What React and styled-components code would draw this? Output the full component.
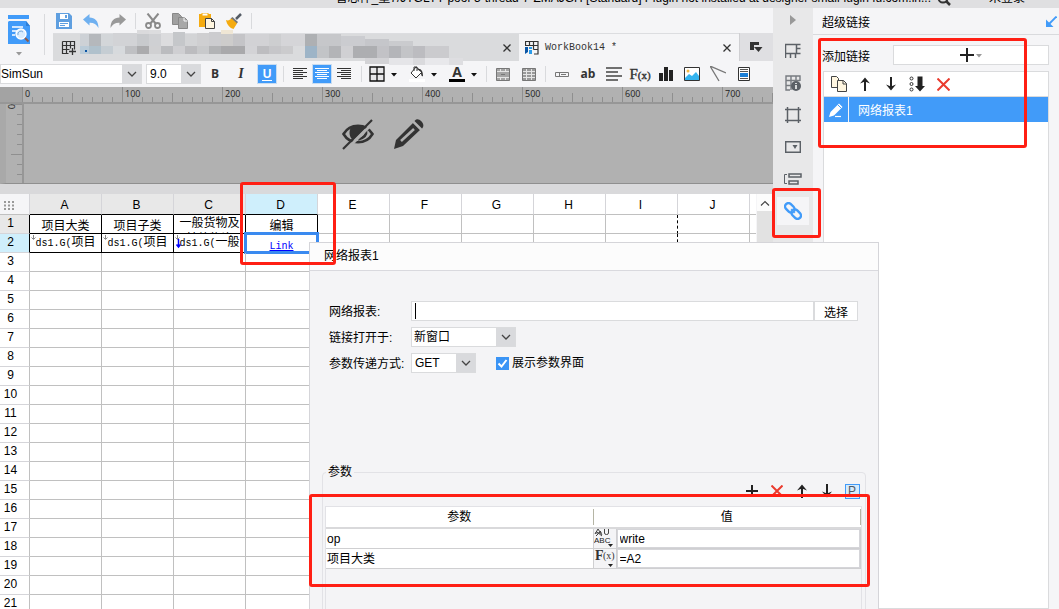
import React, { useState } from 'react';
import styled, { createGlobalStyle, css } from 'styled-components';

const GlobalStyle = createGlobalStyle`
  * {
    box-sizing: border-box;
  }

  body {
    margin: 0;
    overflow: hidden;
    background: #f5f5f7;
  }

  body, button, input, select {
    font-family: 'Liberation Sans', 'Noto Sans CJK SC', sans-serif;
    font-size: 12px;
    color: #000;
  }

  button {
    padding: 0;
    border: none;
    background: none;
    cursor: pointer;
  }

  svg {
    display: block;
    flex-shrink: 0;
  }
`;

const Window = styled.div`
  position: relative;
  display: flex;
  flex-direction: column;
  height: 100vh;
  overflow: hidden;
`;

const TitleBar = styled.header`
  display: flex;
  align-items: flex-end;
  gap: 6px;
  height: 8px;
  flex-shrink: 0;
  overflow: hidden;
  padding: 0 34px 2px 0;
  background: #dfdfe1;
  line-height: 16px;
  white-space: nowrap;
`;

const TitleText = styled.span`
  flex: 1;
  text-align: right;
`;

const UserName = styled.span`
  margin-left: 32px;
`;

const Workspace = styled.div`
  display: grid;
  grid-template-columns: minmax(0, 1fr) 40px 246px;
  flex: 1;
  min-height: 0;
`;

const Editor = styled.main`
  display: flex;
  flex-direction: column;
  min-height: 0;
  min-width: 0;
`;

/* ---------- top area ---------- */

const Top = styled.div`
  display: flex;
  height: 53px;
  flex-shrink: 0;
`;

const LogoMenu = styled.button`
  display: flex;
  flex-direction: column;
  align-items: center;
  gap: 7px;
  width: 44px;
  padding: 7px 7px 0 0;
`;

const TopColumn = styled.div`
  display: flex;
  flex-direction: column;
  flex: 1;
  min-width: 0;
`;

const QuickBar = styled.div`
  display: flex;
  align-items: center;
  gap: 7px;
  height: 25px;
  padding-left: 1px;
`;

const Separator = styled.span`
  width: 1px;
  height: ${(p) => p.$height || 16}px;
  margin: 0 ${(p) => p.$space || 0}px;
  background: #d9dadd;
  flex-shrink: 0;
`;

const LogoSeparator = styled.span`
  width: 1px;
  margin: 6px 8px 6px 0;
  background: #d9dadd;
`;

const ToolButton = styled.button`
  display: flex;
  align-items: center;
  justify-content: center;
  width: 20px;
  height: 20px;
  flex-shrink: 0;
  color: #333;

  ${(p) => p.$active && css`
    background: #419bf9;
    color: #fff;
    outline: 1px solid #c9dcf0;
    outline-offset: -1px;
  `}
`;

const Tabs = styled.div`
  display: flex;
  height: 28px;
`;

const Tab = styled.div`
  position: relative;
  display: flex;
  align-items: center;
  gap: 6px;
  padding: 0 6px;
  background: ${(p) => (p.$active ? '#f5f5f7' : '#dadbdd')};
  border-top: 1px solid #dcdde0;
  ${(p) => (p.$active ? 'width: 220px;' : 'flex: 1; padding-left: 8px;')}
`;

const TabName = styled.span`
  flex: 1;
  font-family: 'Liberation Mono', monospace;
  font-size: 10px;
  color: #333;
`;

const TabClose = styled.button`
  display: flex;
  justify-content: center;
  width: 12px;
`;

const TabMenu = styled.button`
  display: flex;
  align-items: center;
  justify-content: center;
  width: 34px;
  background: #dfdfe2;
  border-left: 1px solid #cfcfd2;
`;

const Smudge = styled.svg`
  position: absolute;
  left: 27px;
  top: -4px;
  pointer-events: none;
`;

/* ---------- format bar ---------- */

const FormatBar = styled.div`
  display: flex;
  align-items: center;
  height: 26px;
  flex-shrink: 0;
  overflow: hidden;
`;

const ToolGroup = styled.div`
  display: flex;
  align-items: center;
  gap: ${(p) => p.$gap}px;
`;

const FontGroup = styled(ToolGroup)`
  margin-right: 4px;
`;

const SelectBox = styled.div`
  display: grid;
  grid-template-columns: minmax(0, 1fr) 20px;
  align-items: center;
  width: ${(p) => p.$width}px;
  height: 20px;

  select {
    grid-area: 1 / 1 / 2 / 3;
    width: 100%;
    height: 20px;
    padding: 0 20px 0 ${(p) => p.$indent || 0}px;
    border: 1px solid #dadbdd;
    border-radius: 0;
    background: linear-gradient(#d9dadd, #d9dadd) right / 19px 100% no-repeat #fff;
    appearance: none;
    outline: none;
  }

  svg {
    grid-area: 1 / 2;
    justify-self: center;
    pointer-events: none;
  }
`;

const DropTool = styled.button`
  display: flex;
  align-items: center;
  gap: 5px;
  width: 31px;
  height: 20px;
`;

const Bold = styled.b`
  font-family: 'Open Sans', sans-serif;
  font-size: 12px;
  line-height: 16px;
  font-weight: 700;
`;

const Italic = styled.i`
  font-family: 'Liberation Serif', serif;
  font-size: 14px;
  font-weight: 700;
`;

const Underline = styled.span`
  width: 10px;
  border-bottom: 1px solid #fff;
  font-weight: 700;
  line-height: 12px;
`;

const Formula = styled.span`
  font-family: 'Liberation Serif', serif;
  font-size: 15px;
  line-height: 16px;
  white-space: nowrap;
  color: #333;
  -webkit-text-stroke: 0.4px #333;

  small {
    font-size: 11px;
  }
`;

/* ---------- ruler and parameter pane ---------- */

const Ruler = styled.div`
  display: flex;
  height: 17px;
  flex-shrink: 0;
  overflow: hidden;
  padding-left: 22px;
  background: linear-gradient(#a3a3a3, #a3a3a3) left / 22px 100% no-repeat #b1b1b1;
  border-bottom: 2px solid #979797;
`;

const RulerUnit = styled.span`
  width: 100px;
  height: 15px;
  flex-shrink: 0;
  padding-left: 3px;
  font-family: 'Open Sans', sans-serif;
  font-size: 9px;
  line-height: 13px;
  color: #222;
  background:
    linear-gradient(90deg, #8f8f8f 1px, transparent 1px) 0 0 / 100px 15px repeat-x,
    linear-gradient(90deg, #8f8f8f 1px, transparent 1px) 0 100% / 50px 9px repeat-x,
    linear-gradient(90deg, #8f8f8f 1px, transparent 1px) 0 100% / 10px 5px repeat-x;
`;

const ParamPane = styled.div`
  display: flex;
  height: 80px;
  flex-shrink: 0;
  background: #b1b1b1;
  border-left: 6px solid #a9a9a9;
  border-bottom: 1px solid #8f8f8f;
`;

const SideRuler = styled.div`
  width: 18px;
  border-right: 2px solid #979797;
  font-family: 'Open Sans', sans-serif;
  font-size: 9px;
  color: #222;
  background:
    linear-gradient(#8f8f8f 1px, transparent 1px) 100% 0 / 11px 50px repeat-y,
    linear-gradient(#8f8f8f 1px, transparent 1px) 100% 0 / 5px 10px repeat-y;

  span {
    display: block;
    width: 10px;
    line-height: 10px;
    writing-mode: vertical-rl;
  }
`;

const ParamCanvas = styled.div`
  display: flex;
  align-items: center;
  justify-content: center;
  gap: 19px;
  flex: 1;
  padding: 0 30px 20px 0;
`;

const Splitter = styled.div`
  height: 10px;
  flex-shrink: 0;
  background: #d9d9db;
`;

/* ---------- sheet ---------- */

const SheetArea = styled.div`
  display: flex;
  flex: 1;
  min-height: 0;
  background: #fff;
`;

const SheetClip = styled.div`
  flex: 1;
  min-width: 0;
  overflow: hidden;
`;

const Sheet = styled.table`
  width: 100%;
  table-layout: fixed;
  border-spacing: 0;
  border-collapse: separate;
`;

const ColHead = styled.th`
  width: ${(p) => p.$width || 'auto'};
  height: 21px;
  padding: 2px 2px 0 0;
  font-weight: 400;
  line-height: 16px;
  border-right: ${(p) => (p.$width ? 1 : 0)}px solid #d5d5d9;
  border-bottom: 1px solid ${(p) => (p.$used ? '#000' : '#c0c0c0')};
  background: ${(p) => p.$tone || '#fff'};

  svg {
    margin-left: 4px;
  }
`;

const RowHead = styled.th`
  height: 19px;
  padding: 0 8px 2px 0;
  font-weight: 400;
  line-height: 16px;
  border-right: 1px solid ${(p) => (p.$used ? '#000' : '#c0c0c0')};
  border-bottom: 1px solid #d5d5d9;
  background: ${(p) => p.$tone || '#fff'};
`;

const Cell = styled.td`
  position: relative;
  height: 19px;
  padding: 0;
  text-align: center;
  vertical-align: top;
  border-right: 1px ${(p) => (p.$pageBreak ? 'dashed' : 'solid')} ${(p) => (p.$used || p.$pageBreak ? '#000' : '#c0c0c0')};
  border-bottom: 1px solid ${(p) => (p.$used ? '#000' : '#c0c0c0')};

  &:last-child {
    border-right: none;
  }

  ${(p) => p.$selected && css`
    &::after {
      content: '';
      position: absolute;
      inset: -2px;
      border: 3px solid #3a8af0;
      pointer-events: none;
    }
  `}
`;

const CellText = styled.div`
  height: 18px;
  padding-top: ${(p) => (p.$wrapped ? 0 : 3)}px;
  overflow: hidden;
  line-height: 16px;
  white-space: pre-line;
`;

const Mono = styled.span`
  font-family: 'Liberation Mono', monospace;
  font-size: 10px;
`;

const CellLink = styled.a`
  font-family: 'Liberation Mono', monospace;
  font-size: 10px;
  color: #00f;
`;

const ExpandMark = styled.svg`
  position: absolute;
  left: 1px;
  top: 1px;
`;

const ScrollTrack = styled.div`
  width: 17px;
  background: #e2e2e2;
  border-left: 1px solid #f5f5f7;
`;

const ScrollButton = styled.button`
  display: flex;
  align-items: center;
  justify-content: center;
  width: 16px;
  height: 17px;
  background: #fcfcfc;
`;

/* ---------- right side ---------- */

const IconRail = styled.nav`
  display: flex;
  flex-direction: column;
  align-items: center;
  background: #e8e8e9;
`;

const RailToggle = styled.button`
  display: flex;
  align-items: center;
  height: 24px;
  margin-bottom: 3px;
`;

const RailItem = styled.button`
  display: flex;
  align-items: center;
  justify-content: center;
  width: 32px;
  height: 28px;
  margin: 2px 0;
  background: ${(p) => (p.$active ? '#f5f5f7' : 'transparent')};
`;

const Panel = styled.aside`
  display: flex;
  flex-direction: column;
  min-height: 0;
  background: #f5f5f7;
`;

const PanelHead = styled.div`
  display: flex;
  align-items: center;
  justify-content: space-between;
  height: 27px;
  padding: 0 2px 0 9px;
  border-bottom: 1px solid #d9dadd;
`;

const AddRow = styled.div`
  display: flex;
  align-items: center;
  gap: 23px;
  padding: 10px 10px 6px 9px;
`;

const AddButton = styled.button`
  display: flex;
  align-items: center;
  justify-content: center;
  gap: 1px;
  flex: 1;
  height: 20px;
  background: #fff;
  border: 1px solid #dadbdd;
`;

const LinkList = styled.div`
  flex: 1;
  margin: 0 10px;
  background: #fff;
  border: 1px solid #dadbdd;
`;

const ListTools = styled.div`
  display: flex;
  align-items: center;
  gap: 6px;
  height: 25px;
  padding-left: 5px;
  border-bottom: 1px solid #dadbdd;
`;

const LinkItem = styled.div`
  display: flex;
  align-items: center;
  height: 25px;
  color: #fff;
  background: #419bf9;

  button {
    display: flex;
    align-items: center;
    justify-content: center;
    width: 25px;
    height: 25px;
    margin-right: 9px;
    border-right: 1px solid #f5f5f7;
  }
`;

/* ---------- dialog ---------- */

const Dialog = styled.section`
  position: absolute;
  left: 309px;
  top: 242px;
  bottom: 0;
  width: 570px;
  display: flex;
  flex-direction: column;
  overflow: hidden;
  background: #f4f4f6;
  border: 1px solid #d5d5d9;
  border-bottom: none;
`;

const DialogTitle = styled.h1`
  margin: 0;
  padding: 0 14px;
  font-size: 12px;
  font-weight: 400;
  line-height: 27px;
  background: #fcfcfc;
  border-bottom: 1px solid #d9d9de;
`;

const Form = styled.form`
  display: grid;
  grid-template-columns: 82px minmax(0, 1fr);
  grid-auto-rows: 20px;
  row-gap: 6px;
  padding: 30px 20px 0 19px;
  line-height: 22px;
`;

const Field = styled.div`
  display: flex;
  height: 20px;
`;

const TextInput = styled.input`
  flex: 1;
  min-width: 0;
  padding: 0 3px;
  border: 1px solid #dadbdd;
  outline: none;
  caret-color: transparent;

  &:placeholder-shown {
    background: linear-gradient(#000, #000) 3px center / 1px 16px no-repeat #fff;
  }

  &:not(:placeholder-shown) {
    caret-color: #000;
  }
`;

const ChooseButton = styled.button`
  width: 44px;
  background: #fff;
  border: 1px solid #dadbdd;
`;

const CheckLabel = styled.label`
  display: flex;
  align-items: center;
  gap: 3px;
  height: 20px;
  margin-left: 20px;
`;

const Check = styled.input`
  appearance: none;
  width: 13px;
  height: 13px;
  margin: 0;
  background: #3a94f5;

  &:checked {
    background: #3a94f5 url("data:image/svg+xml,%3Csvg xmlns='http://www.w3.org/2000/svg' width='13' height='13' fill='none' stroke='white' stroke-width='2'%3E%3Cpath d='M2.5 6.5l3 3 5-6.5'/%3E%3C/svg%3E");
  }
`;

const ParamSet = styled.fieldset`
  display: flex;
  flex-direction: column;
  flex: 1;
  min-width: 0;
  margin: 90px 12px -6px;
  padding: 0 3px 0 2px;
  border: 1px solid #e2e2e6;
  border-radius: 4px;

  legend {
    margin-left: 1px;
    padding: 0 2px;
    line-height: 18px;
  }
`;

const ParamTools = styled.div`
  display: flex;
  justify-content: flex-end;
  gap: 5px;
  padding-bottom: 5px;
`;

const ParamToggle = styled.span`
  width: 15px;
  height: 15px;
  border: 1px solid #419bf9;
  background: #d5ebfc;
  color: #4f5a66;
  line-height: 13px;
`;

const TablePane = styled.div`
  flex: 1;
  border: 1px solid #e2e2e6;
`;

const ParamTable = styled.table`
  width: 100%;
  table-layout: fixed;
  border-spacing: 0;
  background: #fff;
`;

const ParamHead = styled.th`
  height: 22px;
  padding: 2px 0;
  font-weight: 400;
  border-bottom: 2px solid #d9d9db;

  span {
    display: block;
    line-height: 16px;
    border-right: 1px solid #b5b5a5;
  }
`;

const ParamCell = styled.td`
  height: 20px;
  padding: ${(p) => (p.$tight ? 0 : '0 1px')};
  line-height: 18px;
  border-right: 1px solid #cfcfd1;
  border-bottom: 1px solid #cfcfd1;
  background: ${(p) => (p.$tight ? '#f4f4f6' : '#fff')};
`;

const TypeButton = styled.button`
  display: flex;
  align-items: flex-start;
  width: 100%;
  height: 19px;
  overflow: hidden;
`;

const ValueInput = styled.input`
  display: block;
  width: 100%;
  height: 19px;
  padding: 0 2px;
  border: 1px solid #d5d5d9;
  outline: none;
`;

/* red marker boxes laid over the window */
const Marker = styled.div`
  position: absolute;
  left: ${(p) => p.$x}px;
  top: ${(p) => p.$y}px;
  width: ${(p) => p.$w}px;
  height: ${(p) => p.$h}px;
  border: 3px solid #ff1f14;
  border-radius: 3px;
  pointer-events: none;
`;

/* ---------- icons ---------- */

const Svg = ({ w = 16, h = 16, children, ...rest }) => (
  <svg width={w} height={h} viewBox={`0 0 ${w} ${h}`} fill="none" aria-hidden="true" {...rest}>
    {children}
  </svg>
);

const Caret = ({ color = '#111' }) => (
  <Svg w={8} h={5}><path d="M1 1h6L4 4.500z" fill={color} /></Svg>
);

const Chevron = () => (
  <Svg w={10} h={6}><path d="M1 1l4 4 4-4" stroke="#444" strokeWidth="1.3" /></Svg>
);

const LogoIcon = () => (
  <Svg w={22} h={29}>
    <path d="M0 0h21v4H0zM0 7l1-1h17l4 5v18H0z" fill="#419bf9" />
    <path d="M18 6v5h4z" fill="#2c7fd8" />
    <path d="M4 12h11M4 16h5M4 20h3" stroke="#fff" strokeWidth="1.5" />
    <circle cx="13" cy="19" r="5" fill="#d9ecfe" stroke="#fff" strokeWidth="1.4" />
    <path d="M10 20a3 3 0 015-3" stroke="#7aa9d8" />
    <path d="M17 23l3.500 3.500" stroke="#8d5b4c" strokeWidth="2" />
  </Svg>
);

const SaveIcon = () => (
  <Svg>
    <path d="M0 0h13l3 3v13H0z" fill="#5f9fe0" />
    <path d="M4 1h8v5H4z" fill="#fff" />
    <path d="M9 2h2v3H9z" fill="#5f9fe0" />
    <path d="M3 9h10v5H3z" fill="#fff" />
    <path d="M4 10.500h8M4 12.500h5" stroke="#5f9fe0" />
  </Svg>
);

const UndoIcon = ({ color = '#6fb0f0', flip }) => (
  <Svg style={flip ? { transform: 'scaleX(-1)' } : undefined}>
    <path d="M0 6.500L6.500 1v3.500C12 4.500 15.500 8 15.500 15c-2-4-5-5.500-9-5.300V12.500z" fill={color} />
  </Svg>
);

const CutIcon = () => (
  <Svg>
    <path d="M2.500 0.500L11 11M13.500 0.500L5 11" stroke="#8a8a8a" strokeWidth="2" />
    <circle cx="3.500" cy="12.500" r="2.500" stroke="#8a8a8a" strokeWidth="1.8" />
    <circle cx="12.500" cy="12.500" r="2.500" stroke="#8a8a8a" strokeWidth="1.8" />
  </Svg>
);

const CopyIcon = () => (
  <Svg>
    <path d="M0.500 0.500h6l3 3v8h-9z" fill="#a0a0a0" stroke="#888" />
    <path d="M6.500 4.500h6l3 3v8h-9z" fill="#a8a8a8" stroke="#888" />
    <path d="M12 4.500v3.500h3.500" stroke="#f5f5f7" />
  </Svg>
);

const PasteIcon = () => (
  <Svg>
    <path d="M0 1h12v13H0z" fill="#f5ab10" />
    <path d="M3 0h6v3H3z" fill="#fff" stroke="#f5ab10" />
    <path d="M6.500 5.500h6l3 3v7h-9z" fill="#fff6e0" stroke="#444" />
    <path d="M12.500 5.500v3h3" stroke="#444" />
  </Svg>
);

const BrushIcon = () => (
  <Svg>
    <path d="M15 1l-5 5" stroke="#555c66" strokeWidth="2.5" />
    <path d="M6.500 4l5.500 5-1.500 2L4.500 5.500z" fill="#777" />
    <path d="M0 7c2 1 4 0 5.500-1.500L11 10.500 7.500 16C4 15 1 12 0 7z" fill="#f5ab10" />
  </Svg>
);

const NewSheetIcon = () => (
  <Svg>
    <path d="M1.500 1.500h12v8M1.500 1.500v12h6M5.500 1.500v12M9.500 1.500v7M1.500 5.500h12M1.500 9.500h7" stroke="#333" strokeWidth="1.2" />
    <path d="M11.500 8v7M8 11.500h7" stroke="#333" strokeWidth="1.3" />
  </Svg>
);

const WorkbookIcon = () => (
  <Svg w={14} h={14}>
    <path d="M0.500 5V0.500h12.500v12.500H9M0.500 4.500H13M4.500 0.500v4M8.500 0.500v8M8.500 8.500H13" stroke="#333" strokeWidth="1.2" />
    <path d="M0 6h3v5l-3 2z" fill="#0a55a5" />
    <path d="M4 6h3v2H4zM4 9h3v4H4z" fill="#2a9ae8" />
  </Svg>
);

const CrossIcon = ({ size = 8, color = '#333', thick = 1.3 }) => (
  <Svg w={size} h={size}>
    <path d={`M0.500 0.500L${size - 0.5} ${size - 0.5}M${size - 0.5} 0.500L0.500 ${size - 0.5}`} stroke={color} strokeWidth={thick} />
  </Svg>
);

const TabMenuIcon = () => (
  <Svg w={13} h={11}>
    <path d="M0 0h9v3H4v5H0z" fill="#333" />
    <path d="M4 5h8.500L8.500 10z" fill="#333" />
  </Svg>
);

const AlignIcon = ({ mode }) => {
  const starts = { left: 0, center: 2, right: 4 };
  return (
    <Svg w={14} h={12}>
      {[0, 1, 2, 3, 4, 5].map((i) => (
        <path key={i} d={`M${i % 2 ? starts[mode] : 0} ${i * 2 + 0.5}h${i % 2 ? 10 : 14}`} stroke="currentColor" />
      ))}
    </Svg>
  );
};

const BorderIcon = () => (
  <Svg><path d="M1 1h14v14H1zM8 1v14M1 8h14" stroke="#111" strokeWidth="1.3" fill="#e8e8ea" /></Svg>
);

const FillIcon = () => (
  <Svg>
    <path d="M7 1L2 7l5 5 6-6z" fill="#fff" stroke="#333" />
    <path d="M5 5V1h3v4" stroke="#333" />
    <path d="M8 3c4-1 6 2 6 7-1 1-2 0-2-4z" fill="#333" />
    <path d="M0 13h16v3H0z" fill="#fff" />
  </Svg>
);

const FontColorIcon = styled.span`
  width: 16px;
  height: 16px;
  border-bottom: 3px solid #000;
  font-family: 'Open Sans', sans-serif;
  font-size: 14px;
  font-weight: 700;
  line-height: 12px;
  color: #333;
  text-align: center;
`;

const MergeIcon = () => (
  <Svg w={14} h={13}>
    <path d="M0.500 0.500h13v12H0.500z" fill="#a5a5a5" stroke="#777" />
    <path d="M4.500 1v2M9.500 1v2M4.500 10v2M9.500 10v2M1 3.500h12M1 9.500h12" stroke="#e5e5e5" />
    <path d="M5 6.500h4" stroke="#777" />
  </Svg>
);

const UnmergeIcon = () => (
  <Svg w={14} h={13}>
    <path d="M0.500 0.500h13v12H0.500z" fill="#999" stroke="#777" />
    <path d="M4.500 1v11M9.500 1v11M1 3.500h12M1 6.500h12M1 9.500h12" stroke="#e5e5e5" />
  </Svg>
);

const FieldIcon = () => (
  <Svg w={14} h={5}>
    <path d="M0.500 0.500h13v4H0.500zM4.500 0.500v4M6 2.500h5" stroke="#777" />
  </Svg>
);

const ParagraphIcon = () => (
  <Svg w={16} h={14}><path d="M0 1h16M0 5h12M0 9h16M0 13h12" stroke="#444" strokeWidth="1.6" /></Svg>
);

const ChartIcon = () => (
  <Svg w={14} h={14}><path d="M0 6h4v8H0zM5 0h4v14H5zM10 3h4v11h-4z" fill="#222" /></Svg>
);

const PictureIcon = () => (
  <Svg w={16} h={14}>
    <path d="M0.500 0.500h15v13H0.500z" fill="#fff" stroke="#333" />
    <circle cx="4" cy="4" r="1.5" fill="#f5b942" />
    <path d="M1 11l4-4 3 2 4-4 3 4v4H1z" fill="#35b4ef" />
  </Svg>
);

const SlashIcon = () => (
  <Svg><path d="M0 0l16 7M0 0l9 15" stroke="#777" strokeWidth="1.3" /></Svg>
);

const ReportIcon = () => (
  <Svg w={12} h={14}>
    <path d="M0.500 0.500h11v13H0.500z" fill="#fff" stroke="#333" />
    <path d="M2 2.500h8M2 4.500h8M2 11.500h8" stroke="#555" />
    <path d="M2 6h8v4H2z" fill="#1a7fd8" />
  </Svg>
);

const EyeOffIcon = () => (
  <Svg w={32} h={32}>
    <path d="M1.500 16C8 5 24 5 30.500 16 24 27 8 27 1.500 16z" stroke="#333" strokeWidth="2.6" />
    <path d="M9 9c-3 6-1 11 2 13L24 9c-5-3-11-2-15 0z" fill="#333" />
    <path d="M24 12c1 5-2 8-8 9.500" stroke="#333" strokeWidth="2.5" />
    <path d="M3 33L33 3" stroke="#b1b1b1" strokeWidth="3" />
    <path d="M1 31L30 2" stroke="#333" strokeWidth="2.2" />
  </Svg>
);

const PencilIcon = () => (
  <Svg w={32} h={32}>
    <path d="M20 5l7 7L10 28l-9 3 2-9z" fill="#333" />
    <path d="M22 2.500c3-4 11 3 7.500 7.500l-0.500 0.500-7.500-7.500z" fill="#333" />
    <path d="M21 11L8 23" stroke="#b1b1b1" strokeWidth="2.5" />
    <path d="M19.500 3.500l9 9" stroke="#b1b1b1" strokeWidth="1.3" />
  </Svg>
);

const ArrowIcon = ({ down }) => (
  <Svg w={12} h={14} style={down ? { transform: 'rotate(180deg)' } : undefined}>
    <path d="M6 14V3" stroke="#222" strokeWidth="2" />
    <path d="M1 6.500L6 0.500l5 6-5-2z" fill="#222" />
  </Svg>
);

const PlusIcon = ({ size = 12 }) => (
  <Svg w={size} h={size}>
    <path d={`M${size / 2} 0v${size}M0 ${size / 2}h${size}`} stroke="#222" strokeWidth="2" />
  </Svg>
);

const PagesIcon = () => (
  <Svg>
    <path d="M0.500 0.500h5l2 2v9h-7z" fill="#fff6e0" stroke="#444" />
    <path d="M6.500 4.500h6l3 3v8h-9z" fill="#fff6e0" stroke="#444" />
    <path d="M12 4.500v3.500h3.500" stroke="#444" />
  </Svg>
);

const SortIcon = () => (
  <Svg>
    <circle cx="2.500" cy="2.500" r="1.5" stroke="#333" />
    <circle cx="2.500" cy="8" r="1.5" stroke="#333" />
    <circle cx="2.500" cy="13.500" r="1.5" stroke="#333" />
    <path d="M8.500 0.500h5V10H16l-5 5.500L6 10h2.500z" fill="#222" />
  </Svg>
);

const EditIcon = () => (
  <Svg>
    <path d="M1 15l1.500-5L11 1.500 14.500 5 6 13.500z" fill="#fff" />
    <path d="M9.500 2.500l4 4" stroke="#419bf9" />
    <path d="M7 14.500h6" stroke="#fff" strokeWidth="1.2" />
  </Svg>
);

const PanelArrowIcon = () => (
  <Svg w={11} h={11}>
    <path d="M10.500 0.500L3 8" stroke="#419bf9" strokeWidth="1.8" />
    <path d="M0 3.500V11h7.500z" fill="#419bf9" />
  </Svg>
);

const railIcons = [
  <Svg key="cells"><path d="M0.500 1.500h11v9H0.500zM11.500 1.500h4M11.500 5.500h4M11.500 10.500h4M0.500 10v5M5.500 10v5M10.500 10v5" stroke="#5b6066" strokeWidth="1.5" /></Svg>,
  <Svg key="info">
    <path d="M1 8V1h14v5M1 8v7h4M6 1v14M11 1v4M1 5.500h14M1 10.500h5" stroke="#777b80" strokeWidth="1.4" />
    <circle cx="11" cy="11" r="5" fill="#5b6066" />
    <path d="M11 8v1M11 10v4" stroke="#fff" strokeWidth="1.5" />
  </Svg>,
  <Svg key="frame"><path d="M2.500 0v16M13.500 0v16M0 2.500h16M0 13.500h16" stroke="#5b6066" strokeWidth="1.5" /></Svg>,
  <Svg key="widget" h={12}>
    <path d="M0.700 0.700h14.600v10.600H0.700z" stroke="#5b6066" strokeWidth="1.4" />
    <path d="M7.500 4h5L10 8z" fill="#5b6066" />
  </Svg>,
  <Svg key="order" w={18} h={12}>
    <path d="M3 1.500H0.500v9H3" stroke="#5b6066" />
    <path d="M5 1h12v3H5zM5 8h9v3H5z" stroke="#5b6066" strokeWidth="1.5" />
  </Svg>,
  <Svg key="link" w={18} h={18}>
    <g stroke="#419bf9" strokeWidth="2.4" transform="rotate(45 9 9)">
      <rect x="-0.800" y="5.600" width="10.600" height="6.800" rx="3.4" />
      <rect x="8.200" y="5.600" width="10.600" height="6.800" rx="3.4" />
      <path d="M5.500 9h7" stroke="#f5f5f7" strokeWidth="1.600" />
      <path d="M6.500 9h5" strokeWidth="2" />
    </g>
  </Svg>,
];

const TextTypeIcon = () => (
  <Svg w={22} h={19}>
    <path d="M4 0l-3 5M4 0l4 6M1 4h7M2 7l5-5M8 7L3 3M10.500 0v4q0 1.500 2 1.500t2-1.500V0" stroke="#444" />
    <text x="0" y="14" fontFamily="Liberation Sans, sans-serif" fontSize="8" fill="#222">ABC</text>
    <path d="M14 15h5l-2.500 3z" fill="#222" />
  </Svg>
);

const FormulaTypeIcon = () => (
  <Svg w={22} h={19}>
    <text x="1" y="11" fontFamily="Liberation Serif, serif" fontSize="14" fontWeight="700" fill="#333">F</text>
    <text x="9" y="10" fontFamily="Liberation Serif, serif" fontSize="10" fill="#333">(x)</text>
    <path d="M14 15h5l-2.500 3z" fill="#222" />
  </Svg>
);

/* blurred-out file name: [x, y, w, h, colour] */
const smudge = [
  [0, 4, 9, 12, '#cdd1d6'], [9, 4, 12, 12, '#b5b8bc'], [21, 4, 12, 12, '#d3d6d9'], [33, 3, 24, 13, '#d2d3d6'],
  [57, 0, 12, 4, '#dadadc'], [69, 0, 12, 4, '#dcdcde'], [141, 0, 12, 4, '#efe6d4'],
  [57, 4, 12, 12, '#c8cacd'], [69, 4, 12, 12, '#cfd0d3'], [81, 3, 12, 13, '#dcdcde'], [93, 2, 12, 14, '#c5c7ca'],
  [105, 4, 12, 12, '#d3d4d6'], [117, 3, 12, 13, '#cfcfd1'], [129, 2, 12, 14, '#cccccf'], [141, 4, 12, 12, '#cdcccb'],
  [153, 4, 12, 12, '#c4c4c7'], [165, 4, 24, 12, '#d2d2d5'], [189, 4, 12, 12, '#cdced0'], [201, 4, 24, 12, '#d5d5d8'],
  [0, 16, 9, 8, '#bacbd8'], [9, 16, 12, 8, '#b0c1cc'], [21, 16, 12, 8, '#c5cdd3'], [33, 16, 12, 8, '#d7dadd'],
  [45, 16, 12, 8, '#bfc0c3'], [57, 16, 12, 8, '#ababad'], [69, 16, 12, 8, '#d0d0d2'], [81, 16, 12, 8, '#bbbcbf'],
  [93, 16, 12, 8, '#cfcfd2'], [105, 16, 12, 8, '#bcbcbf'], [117, 16, 12, 8, '#c8c9cb'], [129, 16, 12, 8, '#b2b3b5'],
  [141, 16, 24, 8, '#a9a9ab'], [165, 16, 12, 8, '#d3d3d6'], [177, 16, 12, 8, '#bdbdc0'], [189, 16, 12, 8, '#c6c6c9'],
  [201, 16, 12, 8, '#cbcbcd'],
  [225, 4, 12, 12, '#aeb0b3'], [237, 4, 24, 12, '#c6c7ca'], [261, 6, 24, 10, '#cbccd0'], [285, 9, 24, 7, '#c5c6ca'],
  [309, 11, 24, 5, '#cacbce'], [225, 16, 12, 12, '#9db4c7'], [237, 16, 12, 12, '#c2c4c7'], [249, 16, 12, 12, '#b3b4b7'],
  [261, 16, 12, 12, '#d0d0d3'], [273, 16, 24, 12, '#adaeb1'], [297, 16, 12, 12, '#c2c2c6'], [309, 16, 12, 12, '#b4b5b9'],
  [321, 16, 12, 12, '#c3c4c7'], [333, 16, 12, 12, '#bcbcc0'], [345, 16, 24, 12, '#cbcbce'], [285, 28, 24, 6, '#d3d3d6'],
  [309, 28, 24, 7, '#e5e5e8'], [333, 28, 12, 7, '#dadadd'], [345, 28, 24, 7, '#e8e8eb'], [369, 28, 14, 7, '#dedee1'],
];

/* ---------- data ---------- */

const columns = 'ABCDEFGHIJ'.split('');
const rows = Array.from({ length: 21 }, (_, i) => i + 1);

const cells = {
  A1: { text: '项目大类' },
  B1: { text: '项目子类' },
  C1: { text: '一般货物及\n其他物资', wrapped: true },
  D1: { text: '编辑' },
  A2: { ds: true, text: '项目\n大类)' },
  B2: { ds: true, text: '项目\n子类)' },
  C2: { ds: true, text: '一般\n货物及其他)', parent: true },
  D2: { link: 'Link' },
};

const headTone = { A: '#e8e8e8', B: '#e8e8e8', C: '#e8e8e8', D: '#cfeffc' };
const rowTone = { 1: '#e8e8e8', 2: '#cfeffc' };

const SheetCell = ({ col, row }) => {
  const cell = cells[col + row];
  return (
    <Cell $used={!!cell} $selected={col + row === 'D2'} $pageBreak={col === 'I' && row < 3}>
      {cell && (
        <CellText $wrapped={cell.ds || cell.wrapped}>
          {cell.ds && <Mono>ds1.G(</Mono>}
          {cell.link ? <CellLink href="#link">{cell.link}</CellLink> : cell.text}
        </CellText>
      )}
      {cell && cell.ds && (
        <ExpandMark width="8" height="14" viewBox="0 0 8 14" fill="none">
          <path d="M2.500 0v4M0.500 2.500l2 2 2-2" stroke="#888" />
          {cell.parent && <path d="M3.500 4v8M1.500 9.500l2 2.500 2-2.500" stroke="#00f" strokeWidth="1.5" />}
        </ExpandMark>
      )}
    </Cell>
  );
};

const FormatTools = () => (
  <FormatBar>
    <FontGroup $gap={4}>
      <SelectBox $width={142}>
        <select aria-label="字体" defaultValue="SimSun"><option>SimSun</option></select>
        <Chevron />
      </SelectBox>
      <SelectBox $width={55} $indent={3}>
        <select aria-label="字号" defaultValue="9.0"><option>9.0</option></select>
        <Chevron />
      </SelectBox>
    </FontGroup>
    <ToolGroup $gap={6}>
      <ToolButton aria-label="加粗"><Bold>B</Bold></ToolButton>
      <ToolButton aria-label="斜体"><Italic>I</Italic></ToolButton>
      <ToolButton aria-label="下划线" $active><Underline>U</Underline></ToolButton>
    </ToolGroup>
    <Separator $space={6} />
    <ToolGroup $gap={2}>
      <ToolButton aria-label="左对齐"><AlignIcon mode="left" /></ToolButton>
      <ToolButton aria-label="居中" $active><AlignIcon mode="center" /></ToolButton>
      <ToolButton aria-label="右对齐"><AlignIcon mode="right" /></ToolButton>
    </ToolGroup>
    <Separator $space={7} />
    <ToolGroup $gap={9}>
      <DropTool aria-label="边框"><BorderIcon /><Caret /></DropTool>
      <DropTool aria-label="背景色"><FillIcon /><Caret /></DropTool>
      <DropTool aria-label="字体颜色"><FontColorIcon>A</FontColorIcon><Caret /></DropTool>
    </ToolGroup>
    <Separator $space={6} />
    <ToolGroup $gap={6}>
      <ToolButton aria-label="合并单元格"><MergeIcon /></ToolButton>
      <ToolButton aria-label="取消合并"><UnmergeIcon /></ToolButton>
    </ToolGroup>
    <Separator $space={6} />
    <ToolGroup $gap={6}>
      <ToolButton aria-label="数据列"><FieldIcon /></ToolButton>
      <ToolButton aria-label="文本"><Bold>ab</Bold></ToolButton>
      <ToolButton aria-label="富文本"><ParagraphIcon /></ToolButton>
      <ToolButton aria-label="公式"><Formula>F<small>(x)</small></Formula></ToolButton>
      <ToolButton aria-label="图表"><ChartIcon /></ToolButton>
      <ToolButton aria-label="图片"><PictureIcon /></ToolButton>
      <ToolButton aria-label="斜线"><SlashIcon /></ToolButton>
      <ToolButton aria-label="子报表"><ReportIcon /></ToolButton>
    </ToolGroup>
  </FormatBar>
);

const LinkDialog = () => {
  const [url, setUrl] = useState('');
  const [showParams, setShowParams] = useState(true);
  const [values, setValues] = useState({ op: 'write', 项目大类: '=A2' });

  return (
    <Dialog>
      <DialogTitle>网络报表1</DialogTitle>
      <Form onSubmit={(e) => e.preventDefault()}>
        <label htmlFor="url">网络报表:</label>
        <Field>
          <TextInput id="url" placeholder=" " value={url} onChange={(e) => setUrl(e.target.value)} />
          <ChooseButton type="button">选择</ChooseButton>
        </Field>
        <label htmlFor="target">链接打开于:</label>
        <SelectBox $width={105} $indent={2}>
          <select id="target" defaultValue="新窗口"><option>新窗口</option></select>
          <Chevron />
        </SelectBox>
        <label htmlFor="method">参数传递方式:</label>
        <Field>
          <SelectBox $width={65} $indent={3}>
            <select id="method" defaultValue="GET"><option>GET</option></select>
            <Chevron />
          </SelectBox>
          <CheckLabel>
            <Check type="checkbox" checked={showParams} onChange={(e) => setShowParams(e.target.checked)} />
            展示参数界面
          </CheckLabel>
        </Field>
      </Form>

      <ParamSet>
        <legend>参数</legend>
        <ParamTools>
          <ToolButton aria-label="添加"><PlusIcon /></ToolButton>
          <ToolButton aria-label="删除"><CrossIcon size={12} color="#ea3b2e" thick={2} /></ToolButton>
          <ToolButton aria-label="上移"><ArrowIcon /></ToolButton>
          <ToolButton aria-label="下移"><ArrowIcon down /></ToolButton>
          <ToolButton aria-label="参数"><ParamToggle>P</ParamToggle></ToolButton>
        </ParamTools>
        <TablePane>
          <ParamTable>
            <colgroup>
              <col style={{ width: '50%' }} />
              <col style={{ width: 23 }} />
              <col />
            </colgroup>
            <thead>
              <tr>
                <ParamHead><span>参数</span></ParamHead>
                <ParamHead colSpan={2}><span>值</span></ParamHead>
              </tr>
            </thead>
            <tbody>
              {Object.keys(values).map((name) => (
                <tr key={name}>
                  <ParamCell>{name}</ParamCell>
                  <ParamCell $tight>
                    <TypeButton aria-label="类型">
                      {name === 'op' ? <TextTypeIcon /> : <FormulaTypeIcon />}
                    </TypeButton>
                  </ParamCell>
                  <ParamCell $tight>
                    <ValueInput
                      aria-label={name}
                      value={values[name]}
                      onChange={(e) => setValues({ ...values, [name]: e.target.value })}
                    />
                  </ParamCell>
                </tr>
              ))}
            </tbody>
          </ParamTable>
        </TablePane>
      </ParamSet>
    </Dialog>
  );
};

const App = () => (
  <Window>
    <GlobalStyle />
    <TitleBar>
      <TitleText>管芯件_量7/JTGLYT-pool-5-thread-7-ZMAJGH [Standard] Plugin not installed at designer small-lugin fu.com.in...</TitleText>
      <Svg w={14} h={14}>
        <circle cx="6" cy="6" r="4.5" stroke="#333" strokeWidth="2" />
        <path d="M9 9l4 4" stroke="#333" strokeWidth="2.5" />
      </Svg>
      <UserName>未登录</UserName>
    </TitleBar>

    <Workspace>
      <Editor>
        <Top>
          <LogoMenu aria-label="菜单">
            <LogoIcon />
            <Caret color="#999" />
          </LogoMenu>
          <LogoSeparator />
          <TopColumn>
            <QuickBar>
              <ToolButton aria-label="保存"><SaveIcon /></ToolButton>
              <ToolButton aria-label="撤销"><UndoIcon /></ToolButton>
              <ToolButton aria-label="重做"><UndoIcon color="#999" flip /></ToolButton>
              <Separator />
              <ToolButton aria-label="剪切"><CutIcon /></ToolButton>
              <ToolButton aria-label="复制"><CopyIcon /></ToolButton>
              <ToolButton aria-label="粘贴"><PasteIcon /></ToolButton>
              <ToolButton aria-label="格式刷"><BrushIcon /></ToolButton>
              <Separator />
            </QuickBar>
            <Tabs>
              <Tab>
                <NewSheetIcon />
                <TabName />
                <TabClose aria-label="关闭"><CrossIcon /></TabClose>
                <Smudge width="384" height="36" viewBox="0 0 384 36">
                  {smudge.map(([x, y, w, h, fill]) => (
                    <rect key={`${x}-${y}`} x={x} y={y} width={w} height={h} fill={fill} />
                  ))}
                  <rect x="5" y="20" width="2" height="2" fill="#0a55a5" />
                </Smudge>
              </Tab>
              <Tab $active>
                <WorkbookIcon />
                <TabName>WorkBook14 *</TabName>
                <TabClose aria-label="关闭"><CrossIcon /></TabClose>
              </Tab>
              <TabMenu aria-label="标签列表"><TabMenuIcon /></TabMenu>
            </Tabs>
          </TopColumn>
        </Top>

        <FormatTools />

        <Ruler>
          {[0, 100, 200, 300, 400, 500, 600, 700].map((n) => (
            <RulerUnit key={n}>{n}</RulerUnit>
          ))}
        </Ruler>
        <ParamPane>
          <SideRuler><span>0</span></SideRuler>
          <ParamCanvas>
            <EyeOffIcon />
            <PencilIcon />
          </ParamCanvas>
        </ParamPane>
        <Splitter />

        <SheetArea>
          <SheetClip>
            <Sheet>
              <thead>
                <tr>
                  <ColHead $width="30px" $tone="#f5f5f7">
                    <Svg w={11} h={9}>
                      <path d="M0 1h11M0 4.500h11M0 8h11" stroke="#999" strokeWidth="2" strokeDasharray="2 2" />
                    </Svg>
                  </ColHead>
                  {columns.map((c) => (
                    <ColHead key={c} $width="72px" $tone={headTone[c]} $used={!!headTone[c]}>{c}</ColHead>
                  ))}
                  <ColHead />
                </tr>
              </thead>
              <tbody>
                {rows.map((r) => (
                  <tr key={r}>
                    <RowHead $tone={rowTone[r]} $used={r < 3}>{r}</RowHead>
                    {columns.map((c) => <SheetCell key={c} col={c} row={r} />)}
                    <Cell />
                  </tr>
                ))}
              </tbody>
            </Sheet>
          </SheetClip>
          <ScrollTrack>
            <ScrollButton aria-label="向上滚动">
              <Svg w={10} h={6}><path d="M1 5.500l4-4 4 4" stroke="#444" strokeWidth="1.2" /></Svg>
            </ScrollButton>
          </ScrollTrack>
        </SheetArea>
      </Editor>

      <IconRail>
        <RailToggle aria-label="收起">
          <Svg w={6} h={10}><path d="M0 0l6 5-6 5z" fill="#999" /></Svg>
        </RailToggle>
        {railIcons.map((icon) => (
          <RailItem key={icon.key} $active={icon.key === 'link'} aria-label={icon.key}>{icon}</RailItem>
        ))}
      </IconRail>

      <Panel>
        <PanelHead>
          超级链接
          <PanelArrowIcon />
        </PanelHead>
        <AddRow>
          添加链接
          <AddButton aria-label="添加链接">
            <PlusIcon size={14} />
            <Caret color="#999" />
          </AddButton>
        </AddRow>
        <LinkList>
          <ListTools>
            <ToolButton aria-label="复制"><PagesIcon /></ToolButton>
            <ToolButton aria-label="上移"><ArrowIcon /></ToolButton>
            <ToolButton aria-label="下移"><ArrowIcon down /></ToolButton>
            <ToolButton aria-label="排序"><SortIcon /></ToolButton>
            <ToolButton aria-label="删除"><CrossIcon size={13} color="#ea3b2e" thick={2} /></ToolButton>
          </ListTools>
          <LinkItem>
            <button aria-label="编辑"><EditIcon /></button>
            网络报表1
          </LinkItem>
        </LinkList>
      </Panel>
    </Workspace>

    <LinkDialog />

    <Marker $x={240} $y={182} $w={96} $h={83} />
    <Marker $x={772} $y={188} $w={49} $h={50} />
    <Marker $x={818} $y={38} $w={209} $h={110} />
    <Marker $x={309} $y={494} $w={561} $h={93} />
  </Window>
);

export default App;
